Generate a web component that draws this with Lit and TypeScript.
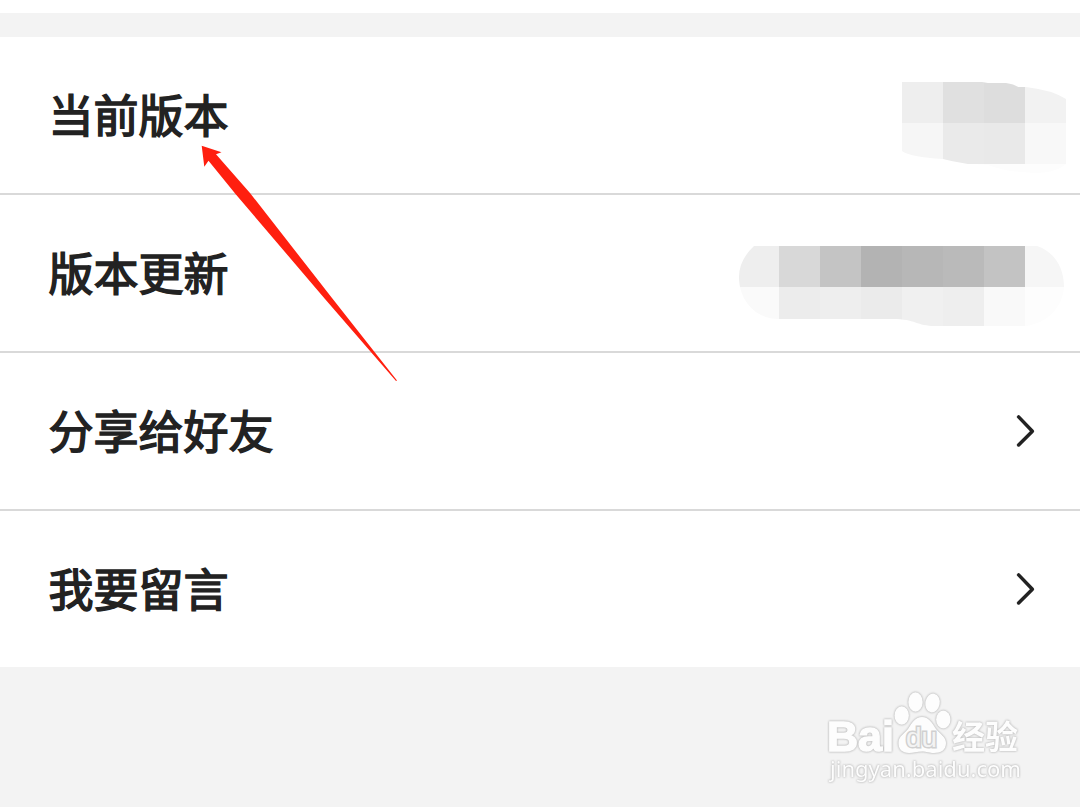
import { css, html, LitElement, svg, TemplateResult } from "lit";
import { customElement, property } from "lit/decorators.js";

interface Tile {
    x: number;
    y: number;
    w: number;
    h: number;
    fill: string;
}

const toTiles = (xs: number[], ys: number[], fills: string[][]): Tile[] =>
    fills.flatMap((row, r) => row.map((fill, c) => ({
        x: xs[c],
        y: ys[r],
        w: xs[c + 1] - xs[c],
        h: ys[r + 1] - ys[r],
        fill
    })));

const versionTiles = toTiles(
    [0, 41, 82, 123, 164],
    [0, 41, 82, 92],
    [
        ['#eeeeee', '#e0e0e0', '#dddddd', '#f2f2f2'],
        ['#f6f6f6', '#eaeaea', '#e9e9e9', '#f8f8f8'],
        ['#fefefe', '#fefefe', '#fdfdfd', '#fdfdfd']
    ]
);

const updateTiles = toTiles(
    [0, 40, 81, 122, 163, 204, 245, 286, 326],
    [0, 41, 81],
    [
        ['#eeeeee', '#d8d8d8', '#c4c4c4', '#b3b3b3', '#b7b7b7', '#bababa', '#c3c3c3', '#f6f6f6'],
        ['#fafafa', '#ececec', '#eeeeee', '#ebebeb', '#f0f0f0', '#eeeeee', '#f9f9f9', '#fdfdfd']
    ]
);

@customElement('masked-value')
export class MaskedValue extends LitElement {
    @property({type: Array}) tiles:Tile[] = [];
    @property({type: String}) outline = '';
    @property({type: Number}) width = 0;
    @property({type: Number}) height = 0;

    static override styles = css`
        :host {
            display: block;
        }
        svg {
            display: block;
        }
    `;

    render() {
        return html`
            <svg width=${this.width} height=${this.height}>
                <clipPath id="outline"><path d=${this.outline}></path></clipPath>
                <g clip-path="url(#outline)" shape-rendering="crispEdges">
                    ${this.tiles.map(t => svg`<rect x=${t.x} y=${t.y} width=${t.w} height=${t.h} fill=${t.fill}></rect>`)}
                </g>
            </svg>
        `;
    }
}

@customElement('settings-row')
export class SettingsRow extends LitElement {
    @property({type: String}) label = '';

    static override styles = css`
        :host {
            display: flex;
            box-sizing: border-box;
            height: 158px;
            padding-left: 48.500px;
            align-items: center;
            justify-content: space-between;
            background: #fff;
            border-bottom: 2px solid #d9d9d9;
        }
        :host(:last-of-type) {
            height: 156px;
            border-bottom: none;
        }
        .label {
            padding-bottom: 2px;
            font-family: 'Noto Sans CJK SC', sans-serif;
            font-size: 45px;
            font-weight: 400;
            line-height: 66px;
            color: #222;
            -webkit-text-stroke: 1.500px #222;
        }
    `;

    render() {
        return html`
            <span class="label">${this.label}</span>
            <slot></slot>
        `;
    }
}

@customElement('baidu-mark')
export class BaiduMark extends LitElement {
    static override styles = css`
        svg {
            display: block;
        }
        .mark {
            fill: #fdfdfd;
            filter: drop-shadow(0 0 1px #bbb) drop-shadow(0 0 .5px #ccc);
        }
        .latin {
            font-family: 'Liberation Sans', sans-serif;
            font-weight: bold;
            font-size: 42px;
            stroke: #fdfdfd;
            stroke-width: 1.500px;
        }
        .du {
            font-family: 'Liberation Sans', sans-serif;
            font-size: 27px;
            fill: #f3f3f3;
            stroke: #d0d0d0;
            stroke-width: 3px;
            paint-order: stroke;
        }
        .cjk {
            font-family: 'Noto Sans CJK SC', sans-serif;
            font-weight: bold;
            font-size: 33px;
        }
        .site {
            font-family: 'Noto Sans', sans-serif;
            font-size: 21px;
        }
    `;

    render() {
        return html`
            <svg width="220" height="110" viewBox="820 680 220 110">
                <text class="mark latin" x="827" y="751" textLength="67" lengthAdjust="spacingAndGlyphs">Bai</text>
                <g class="mark">
                    <ellipse cx="901.7" cy="715.5" rx="7.2" ry="9.3"></ellipse>
                    <ellipse cx="915.5" cy="702" rx="7.2" ry="9.7"></ellipse>
                    <ellipse cx="932.5" cy="703" rx="7.2" ry="9.5" transform="rotate(10 932.5 703)"></ellipse>
                    <ellipse cx="943.3" cy="719.5" rx="7.2" ry="9"></ellipse>
                    <path d="M922 717C929 717 932 723 936 729C940 734 946 737 946 743C946 750 941 753 934 753C929 753 927 751.500 922 751.500C917 751.500 914 753 909 753C902 753 898 749 898.500 742C899 736 904 734 908 729C912 723 915 717 922 717Z"></path>
                </g>
                <text class="du" x="906" y="747" textLength="31" lengthAdjust="spacingAndGlyphs">du</text>
                <text class="mark cjk" x="952" y="749" textLength="66" lengthAdjust="spacingAndGlyphs">经验</text>
                <text class="mark site" x="830" y="777" textLength="191" lengthAdjust="spacingAndGlyphs">jingyan.baidu.com</text>
            </svg>
        `;
    }
}

@customElement('app-root')
export class AppRoot extends LitElement {
    static override styles = css`
        :host {
            display: flex;
            flex-direction: column;
            position: relative;
            box-sizing: border-box;
            width: 1080px;
            height: 807px;
            overflow: hidden;
            background: #f3f3f3;
        }
        .header {
            height: 13px;
            margin-bottom: 24px;
            background: #fff;
        }
        .version {
            align-self: flex-start;
            margin: 45px 14px 0 0;
        }
        .update {
            align-self: flex-start;
            margin: 51px 15px 0 0;
        }
        .chevron {
            margin-right: 40px;
            fill: none;
            stroke: #222;
            stroke-width: 3.500px;
            stroke-linecap: round;
            stroke-linejoin: round;
        }
        .footer {
            display: flex;
            flex: 1;
            justify-content: flex-end;
            padding: 13px 40px 0 0;
        }
        .arrow {
            position: absolute;
            left: 190px;
            top: 135px;
            fill: #ff1f0f;
        }
    `;

    chevron():TemplateResult {
        return html`
            <svg class="chevron" width="26" height="40" viewBox="0 0 26 40">
                <path d="M4.600 5.900L18.400 20.200L4.600 33.900"></path>
            </svg>
        `;
    }

    render() {
        return html`
            <div class="header"></div>
            <settings-row label="当前版本">
                <masked-value class="version" .tiles=${versionTiles} width="164" height="92"
                    outline="M0 0H80L86 1H104Q112 2 116 5H124Q150 8 164 17V82Q154 91 132 91Q104 90 86 83L66 82Q48 79 41 77Q8 75 0 69Z"></masked-value>
            </settings-row>
            <settings-row label="版本更新">
                <masked-value class="update" .tiles=${updateTiles} width="326" height="81"
                    outline="M15 0H298C316 6 325 22 325 41C324 61 308 78 286 80H196C178 80 176 73 154 73H40C16 73 0 54 0 31Q0 14 15 0Z"></masked-value>
            </settings-row>
            <settings-row label="分享给好友">${this.chevron()}</settings-row>
            <settings-row label="我要留言">${this.chevron()}</settings-row>
            <div class="footer"><baidu-mark></baidu-mark></div>
            <svg class="arrow" width="220" height="255" viewBox="190 135 220 255">
                <path d="M201.700 145.800L221.500 152.300L216 154.200L250 193L332 298L397 380.500L396 381L325 299L235.500 194L208.500 160.700L204.300 166.700Z"></path>
            </svg>
        `;
    }
}
